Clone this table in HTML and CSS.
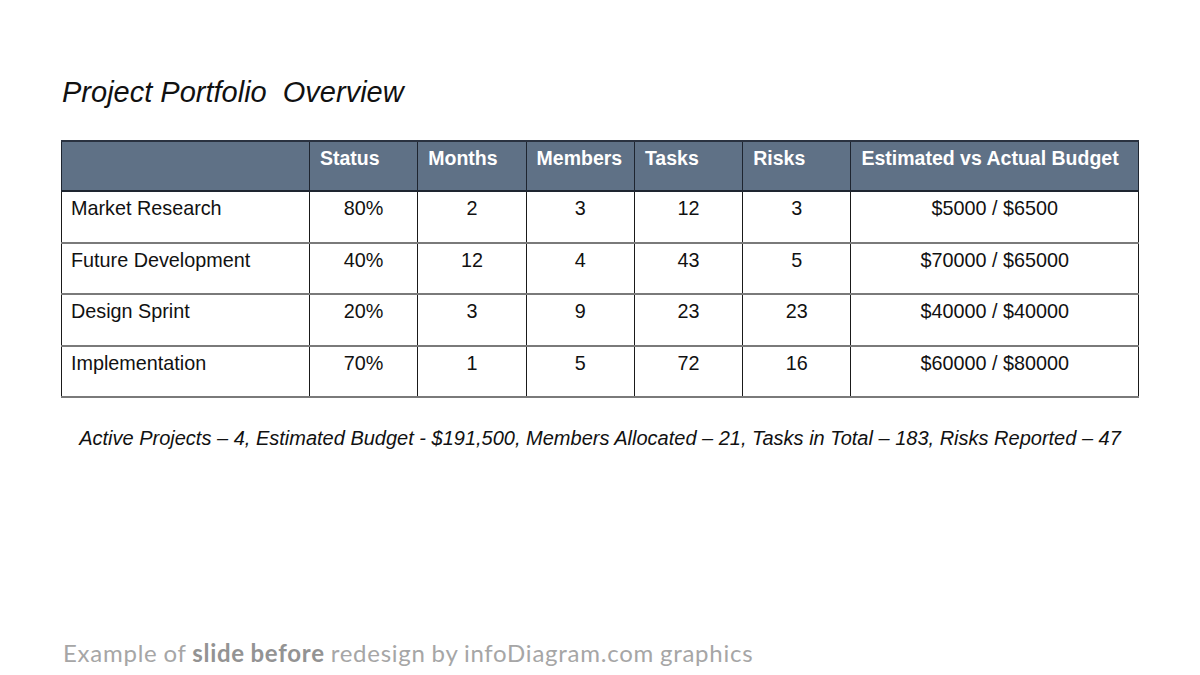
FILE: index.html
```html
<!DOCTYPE html>
<html>
<head>
<meta charset="utf-8">
<link rel="stylesheet" href="styles.css">
</head>
<body>
<div class="slide">
  <h1 class="title">Project Portfolio&nbsp; Overview</h1>
  <table class="grid">
    <colgroup>
      <col class="c-name"><col class="c-num"><col class="c-num"><col class="c-num"><col class="c-num"><col class="c-num"><col class="c-budget">
    </colgroup>
    <thead>
      <tr>
        <th></th><th>Status</th><th>Months</th><th>Members</th><th>Tasks</th><th>Risks</th><th>Estimated vs Actual Budget</th>
      </tr>
    </thead>
    <tbody>
      <tr><td class="name">Market Research</td><td>80%</td><td>2</td><td>3</td><td>12</td><td>3</td><td>$5000 / $6500</td></tr>
      <tr><td class="name">Future Development</td><td>40%</td><td>12</td><td>4</td><td>43</td><td>5</td><td>$70000 / $65000</td></tr>
      <tr><td class="name">Design Sprint</td><td>20%</td><td>3</td><td>9</td><td>23</td><td>23</td><td>$40000 / $40000</td></tr>
      <tr><td class="name">Implementation</td><td>70%</td><td>1</td><td>5</td><td>72</td><td>16</td><td>$60000 / $80000</td></tr>
    </tbody>
  </table>
  <p class="summary">Active Projects – 4, Estimated Budget - $191,500, Members Allocated – 21, Tasks in Total – 183, Risks Reported – 47</p>
  <p class="caption">Example of <b>slide before</b> redesign by infoDiagram.com graphics</p>
</div>
</body>
</html>
```
FILE: styles.css
```css
html, body {
  margin: 0;
  padding: 0;
  background: #ffffff;
}
.slide {
  width: 1200px;
  height: 675px;
  box-sizing: border-box;
  padding: 74px 61px 0 61px;
  font-family: "Liberation Sans", Arial, sans-serif;
  color: #111111;
  position: relative;
}
.title {
  margin: 0 0 0 1px;
  font-size: 29px;
  line-height: 36px;
  font-weight: normal;
  font-style: italic;
  color: #111111;
  height: 66px;
}
.grid {
  border-collapse: collapse;
  width: 1077px;
  table-layout: fixed;
  font-size: 19.8px;
}
.c-name { width: 248px; }
.c-num { width: 108.3px; }
.c-budget { width: 287.5px; }
.grid th {
  background: #5f7186;
  color: #ffffff;
  font-weight: bold;
  font-size: 19.5px;
  text-align: left;
  vertical-align: top;
  padding: 5px 0 0 10px;
  height: 43px;
  border: 1px solid #1e2530;
  border-top: 2px solid #2a3240;
  border-bottom: 2px solid #1e2530;
  white-space: nowrap;
  overflow: hidden;
}
.grid td {
  height: 42.6px;
  padding: 5px 0 2px 0;
  vertical-align: top;
  text-align: center;
  border-left: 1px solid #1a1a1a;
  border-right: 1px solid #1a1a1a;
  border-bottom: 2px solid #7a7a7a;
  color: #111111;
}
.grid td.name {
  text-align: left;
  padding-left: 9px;
}
.summary {
  margin: 29px 0 0 0;
  text-align: center;
  font-style: italic;
  font-size: 20px;
  color: #111111;
}
.caption {
  position: absolute;
  left: 63px;
  top: 638px;
  margin: 0;
  font-family: Lato, "Open Sans", sans-serif;
  font-size: 24px;
  color: #a6a6a6;
  letter-spacing: 0.75px;
  word-spacing: -1px;
}
.caption b {
  font-weight: bold;
  color: #939393;
}
```
